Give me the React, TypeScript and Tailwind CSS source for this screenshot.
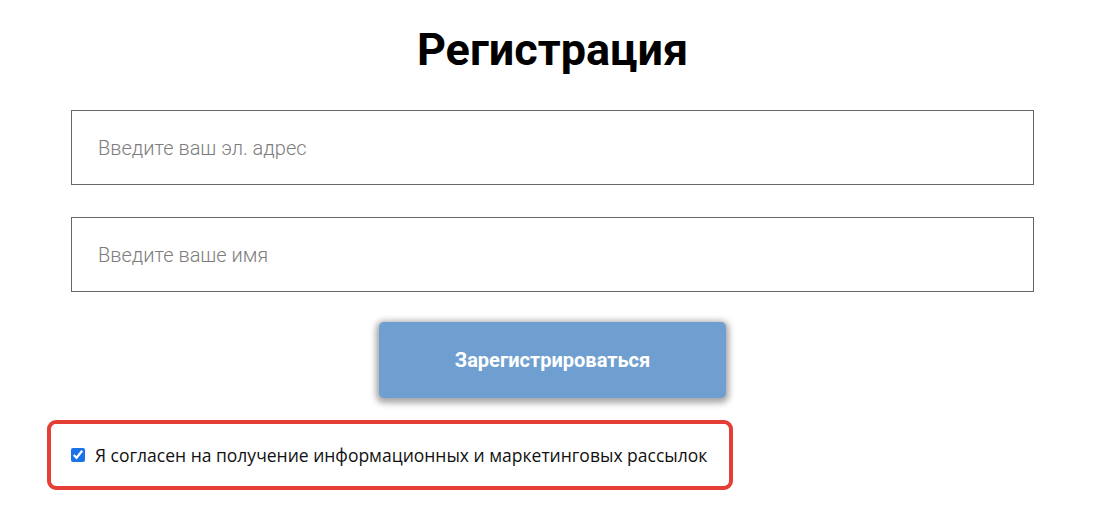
import React from "react";

export default function App() {
  return (
    <div className="w-[1105px] h-[508px] bg-white overflow-hidden font-['Roboto',sans-serif]">
      <div className="w-[963px] mx-auto flex flex-col">
        <h1 className="text-center text-[45px] font-bold text-black leading-none mt-[27px] h-[45px]">
          Регистрация
        </h1>
        <input
          type="text"
          placeholder="Введите ваш эл. адрес"
          className="mt-[38px] h-[75px] w-full border border-[#666] px-[26px] text-[20px] font-light text-black placeholder:text-[#7d7d7d] outline-none"
        />
        <input
          type="text"
          placeholder="Введите ваше имя"
          className="mt-[32px] h-[75px] w-full border border-[#666] px-[26px] text-[20px] font-light text-black placeholder:text-[#7d7d7d] outline-none"
        />
        <button className="mt-[30px] mx-auto w-[347px] h-[76px] rounded-[5px] bg-[#6f9fd1] text-white text-[20px] font-bold shadow-[0_2px_6px_3px_rgba(0,0,0,0.35)]">
          Зарегистрироваться
        </button>
        <div className="mt-[22px] ml-[-24px] w-[686px] h-[70px] border-[4px] border-[#e53e34] rounded-[9px] flex items-center pl-[20px]">
          <label className="flex items-center gap-[10px] text-[17.5px] text-[#111] font-['Open_Sans',sans-serif]">
            <input type="checkbox" defaultChecked className="w-[14px] h-[14px] accent-[#1a73e8]" />
            Я согласен на получение информационных и маркетинговых рассылок
          </label>
        </div>
      </div>
    </div>
  );
}
